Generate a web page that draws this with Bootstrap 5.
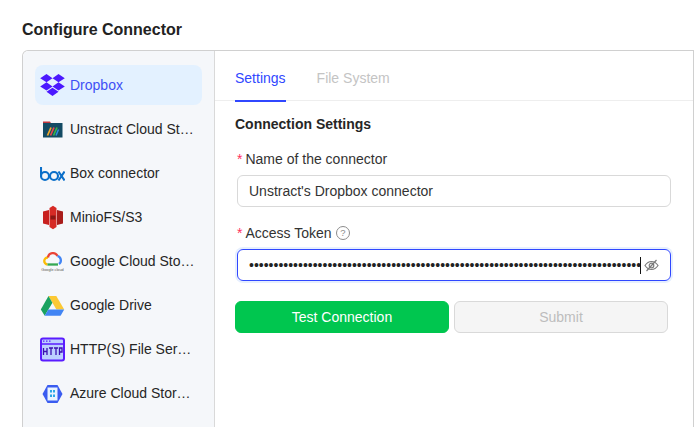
<!doctype html>
<html lang="en"><head><meta charset="utf-8">
<link href="https://cdn.jsdelivr.net/npm/bootstrap@5.3.0/dist/css/bootstrap.min.css" rel="stylesheet">
<style>
html,body{height:427px;overflow:hidden;background:#fff}
body{font-family:"Liberation Sans",Arial,sans-serif;font-size:14px;color:#212529;padding:20px 0 0 22px}
.page-h{font-size:16px;font-weight:700;line-height:20px;margin:0 0 10px;color:#222}
.shell{width:672px;height:377px;border:1px solid #d0d0d0;border-bottom:0;border-top-left-radius:6px}
.side{width:192px;flex:none;background:#f5f7fa;border-right:1px solid #d9d9d9;padding:14px 12px 0;border-top-left-radius:6px}
.conn{height:40px;margin-bottom:4px;border-radius:8px;padding-left:5px;gap:5px;color:#262626;line-height:20px;white-space:nowrap}
.conn.on{background:#e3f1ff;color:#3e50f5}
.conn svg{flex:none;width:25px;height:25px}
.tabs-r{height:50px;border-bottom:1px solid #eee;padding-left:20px;gap:31px;align-items:stretch}
.tb{line-height:54px;color:#c4c4c4;height:50px}
.tb.on{color:#3047ff;border-bottom:2px solid #3047ff;margin-bottom:-1px;height:51px}
.body-p{padding:14px 22px 0 20px}
.sec{font-weight:700;line-height:18px;margin-bottom:16px;color:#262626}
.lab{padding-left:2px;line-height:20px;margin-bottom:6px;color:#333}
.req{color:#ff3060;margin-right:3px}
.inp{margin-left:2px;width:434px;height:32px;border:1px solid #d9d9d9;border-radius:6px;padding:0 11px;line-height:30px;color:#333;margin-bottom:16px}
.inp.foc{border-color:#3047ff;box-shadow:0 0 0 2px #e6efff;padding-right:11px;margin-bottom:20px}
.dots{white-space:nowrap;color:#222;border-right:1px solid #111;height:17px;line-height:17px;width:392px;flex:none;overflow:hidden}
.acts{gap:5px}
.b-go,.b-no{width:214px;height:32px;border-radius:6px;padding:0;font-size:14px;line-height:30px;text-align:center}
.b-go{background:#00c64f;border:1px solid #00c64f;color:#fff}
.b-no{background:#f5f5f5;border:1px solid #d9d9d9;color:#bdbdbd}
</style></head><body>
<h1 class="page-h">Configure Connector</h1>
<div class="shell d-flex">
 <div class="side">
  <div class="conn on d-flex align-items-center"><svg viewBox="0 0 25 25"><path fill="#4a18ff" d="M6.500 1 .2 5.200l6.300 4.100 6-4.100zM18.500 1l-6 4.200 6 4.100 6.300-4.100zM.2 13.400l6.300 4.100 6-4.100-6-4.100zM18.500 9.300l-6 4.100 6 4.100 6.300-4.100zM6.500 18.800l6 4.200 6-4.200-6-4z"/></svg><span>Dropbox</span></div>
  <div class="conn d-flex align-items-center"><svg viewBox="0 0 25 25"><path d="M3 4.500h7l1.500 2.500H3z" fill="#c3363c"/><path d="M3 6h19.500v14.500H3z" fill="#134a63"/><path d="M7.500 18.500l3.500-8" stroke="#f0a92c" stroke-width="1.800"/><path d="M10.500 18.500l3.500-8" stroke="#e5484d" stroke-width="1.800"/><path d="M13.500 18.500l3.500-8" stroke="#37b34a" stroke-width="1.800"/><path d="M16 18.500l2.500-6" stroke="#2f8fe0" stroke-width="1.500"/></svg><span>Unstract Cloud St…</span></div>
  <div class="conn d-flex align-items-center"><svg viewBox="0 0 25 25"><g fill="none" stroke="#0b6fc9" stroke-width="2.100"><path d="M1 6v10"/><circle cx="5" cy="15" r="4"/><circle cx="14" cy="15" r="4"/><path d="M18.500 10.500l6 9M24.500 10.500l-6 9"/></g></svg><span>Box connector</span></div>
  <div class="conn d-flex align-items-center"><svg viewBox="0 0 25 25"><path d="M3 6.500 9 5v15l-6-1.500z" fill="#c8201f"/><path d="M23 6.500 17 5v15l6-1.500z" fill="#a91d1b"/><path d="M9.500 3 13 .8 16.500 3v19L13 24.200 9.500 22z" fill="#d62a25"/><path d="M10.500 10.500h5v4h-5z" fill="#8a1714"/></svg><span>MinioFS/S3</span></div>
  <div class="conn d-flex align-items-center"><svg viewBox="0 0 25 25"><g fill="none" stroke-width="2.300"><path d="M7.500 15.500a3.500 3.500 0 0 1 .5-7" stroke="#fbbc05"/><path d="M8 8.500a5 5 0 0 1 9.500-1.500" stroke="#ea4335"/><path d="M17.500 7a4.500 4.500 0 0 1 1.500 8" stroke="#4285f4"/><path d="M7.500 15.500H18" stroke="#34a853"/></g><text x="12.500" y="22" text-anchor="middle" font-size="3.800" fill="#555" font-family="Liberation Sans">Google cloud</text></svg><span>Google Cloud Sto…</span></div>
  <div class="conn d-flex align-items-center"><svg viewBox="0 0 25 25"><path d="M8.500 3h7.800l7.900 13.500h-7.800z" fill="#fcc934"/><path d="M8.500 3l3.900 6.800-7.700 12.900L.8 16.500z" fill="#1aa260"/><path d="M8.300 16.500h15.900l-3.600 6.200H4.700z" fill="#4285f4"/></svg><span>Google Drive</span></div>
  <div class="conn d-flex align-items-center"><svg viewBox="0 0 25 25"><rect x="1" y="1.500" width="23" height="22" rx="2" fill="#bcd0ff" stroke="#5a1cff" stroke-width="2"/><path d="M1 7h23" stroke="#5a1cff" stroke-width="1.500"/><path d="M3 4.200h1.500M6 4.200h1.500M9 4.200h1.500" stroke="#5a1cff" stroke-width="1.300"/><path d="M3.500 11v7M7 11v7M3.500 14.500H7M9 11h4M11 11v7M14 11h4M16 11v7M19.500 18v-7h2.500v4h-2.500" fill="none" stroke="#3b10b0" stroke-width="1.300"/></svg><span>HTTP(S) File Ser…</span></div>
  <div class="conn d-flex align-items-center"><svg viewBox="0 0 25 25"><path d="M2.500 13l5-9h10l5 9-5 9h-10z" fill="#3a5cf0"/><rect x="7.500" y="6.500" width="10" height="13" fill="#e8f4ff"/><g fill="#2aa8e8"><rect x="10" y="9" width="2" height="2.500"/><rect x="13" y="9" width="2" height="2.500"/><rect x="10" y="13.500" width="2" height="2.500"/><rect x="13" y="13.500" width="2" height="2.500"/></g></svg><span>Azure Cloud Stor…</span></div>
 </div>
 <div class="flex-grow-1">
  <div class="tabs-r d-flex"><div class="tb on">Settings</div><div class="tb">File System</div></div>
  <div class="body-p">
   <div class="sec">Connection Settings</div>
   <div class="lab"><span class="req">*</span>Name of the connector</div>
   <div class="inp">Unstract's Dropbox connector</div>
   <div class="lab d-flex align-items-center"><span class="req">*</span>Access Token<svg class="ms-1" width="14" height="14" viewBox="0 0 14 14"><circle cx="7" cy="7" r="6.500" fill="none" stroke="#8c8c8c"/><text x="7" y="10.300" text-anchor="middle" font-size="9.500" fill="#8c8c8c" font-family="Liberation Sans">?</text></svg></div>
   <div class="inp foc d-flex align-items-center"><div class="dots">••••••••••••••••••••••••••••••••••••••••••••••••••••••••••••••••••••••••••••••••</div><svg class="ms-auto" width="15" height="15" viewBox="0 0 15 15" fill="none" stroke="#7a7a7a" stroke-width="1.200"><path d="M1 7.500C3 4.500 5 3.500 7.500 3.500S12 4.500 14 7.500C12 10.500 10 11.500 7.500 11.500S3 10.500 1 7.500z"/><circle cx="7.500" cy="7.500" r="2.300"/><path d="M2.500 13 12.500 2"/></svg></div>
   <div class="acts d-flex"><button class="b-go">Test Connection</button><button class="b-no" disabled>Submit</button></div>
  </div>
 </div>
</div>
</body></html>
